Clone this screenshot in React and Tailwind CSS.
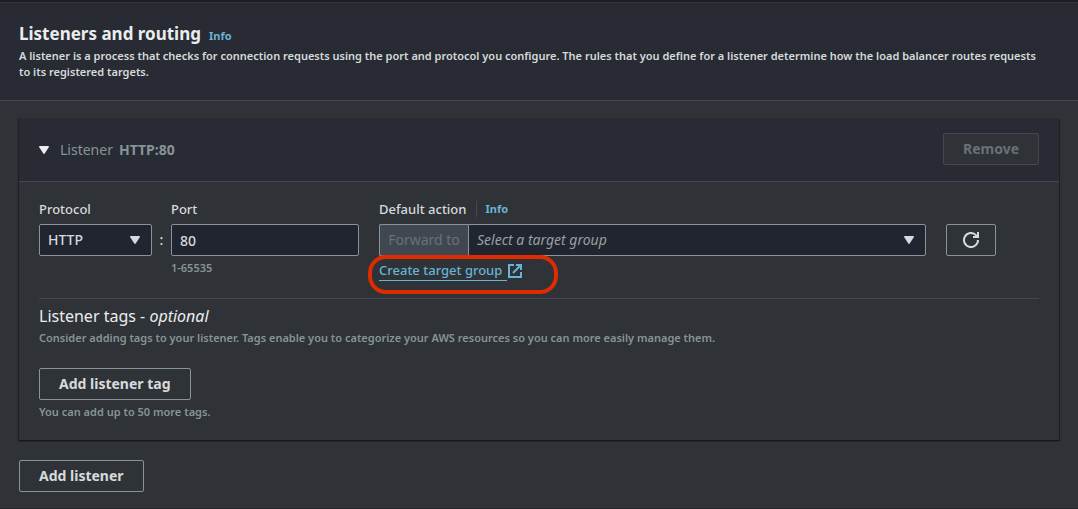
import { useState } from "react";

function Caret({ className = "" }) {
  return (
    <svg
      viewBox="0 0 10 8"
      className={`h-2 w-[10px] shrink-0 fill-current ${className}`}
      aria-hidden="true"
    >
      <path d="M.8 0h8.400c.7 0 1 .6.6 1.200L5.700 7.500c-.3.600-1.100.600-1.400 0L.2 1.200C-.2.600.1 0 .8 0z" />
    </svg>
  );
}

function ExternalIcon() {
  return (
    <svg
      viewBox="0 0 16 16"
      className="size-4 shrink-0"
      fill="none"
      stroke="currentColor"
      strokeWidth="2"
      aria-hidden="true"
    >
      <path d="M7 2H2v12h12V9" />
      <path d="M9 2h5v5" />
      <path d="M6 10l8-8" />
    </svg>
  );
}

function RefreshIcon() {
  return (
    <svg
      viewBox="0 0 16 16"
      className="size-4"
      fill="none"
      stroke="currentColor"
      strokeWidth="2"
      aria-hidden="true"
    >
      <path d="M15 8a7 7 0 1 1-2-4.900L15 5" />
      <path d="M15 0v5h-5" />
    </svg>
  );
}

const button =
  "h-8 rounded-xs border border-[#879596] px-[19px] text-sm leading-5 font-bold text-[#d5dbdb]";
const field = "h-8 w-full rounded-xs border border-[#879596] bg-[#22252f] px-2 text-sm";
const label = "text-[13px] leading-5 font-medium";
const info = "text-[11px] leading-4 font-bold text-[#68b4d4]";
const hint = "text-[11px] leading-4 font-semibold text-[#879596]";

export default function App() {
  const [open, setOpen] = useState(true);
  const [port, setPort] = useState("80");

  return (
    <main className="border-t-2 border-[#1b1e24] bg-[#2f3237] font-['Noto_Sans',sans-serif] text-[#d5dbdb]">
      <section className="border-y border-t-[#323439] border-b-[#24272b]">
        <header className="border-b border-[#45484f] bg-[#282b33] px-[19px] pt-5 pb-5">
          <div className="flex items-baseline gap-2">
            <h2 className="text-[17px] leading-[22px] font-bold text-[#eaeded]">
              Listeners and routing
            </h2>
            <a href="#routing-info" className={info}>
              Info
            </a>
          </div>
          <p className="mt-[3px] pr-4 text-[11px] leading-4 font-semibold">
            A listener is a process that checks for connection requests using the port and protocol
            you configure. The rules that you define for a listener determine how the load balancer
            routes requests to its registered targets.
          </p>
        </header>

        <div className="px-[19px] pt-[17px] pb-4">
          <article className="shadow-[0_1px_1px_0_#14171a,1px_1px_1px_0_#202327,-1px_1px_1px_0_#202327]">
            <div className="flex items-center justify-between border-b border-[#45484f] bg-[#282b33] px-5 pt-[15px] pb-4">
              <button
                type="button"
                aria-expanded={open}
                onClick={() => setOpen(!open)}
                className="flex items-center pt-px text-sm leading-5 text-[#879596]"
              >
                <Caret className="mr-[11px] text-[#eaeded]" />
                <span className="mr-1.5">Listener</span>
                <strong className="font-bold">HTTP:80</strong>
              </button>
              <button
                type="button"
                disabled
                className="h-8 rounded-xs border border-[#45484f] bg-[#2f3237] px-[19px] text-sm leading-5 font-bold text-[#687078]"
              >
                Remove
              </button>
            </div>

            {open && (
              <div className="px-5 pt-[17px] pb-5">
                <div className="flex items-start pr-[43px] pb-[17px]">
                  <div className="w-[113px] shrink-0">
                    <label htmlFor="protocol" className={`${label} block`}>
                      Protocol
                    </label>
                    <div className="mt-[5px] grid items-center">
                      <select
                        id="protocol"
                        className={`${field} col-start-1 row-start-1 appearance-none font-medium`}
                      >
                        <option>HTTP</option>
                        <option>HTTPS</option>
                      </select>
                      <Caret className="pointer-events-none col-start-1 row-start-1 mr-3 justify-self-end" />
                    </div>
                  </div>
                  <span className="w-[19px] shrink-0 pt-[31px] text-center text-sm leading-5 font-medium">
                    :
                  </span>
                  <div className="min-w-0 flex-[188]">
                    <label htmlFor="port" className={`${label} block`}>
                      Port
                    </label>
                    <input
                      id="port"
                      value={port}
                      onChange={(e) => setPort(e.target.value)}
                      className={`${field} mt-[5px] block font-medium`}
                    />
                    <p className={`${hint} mt-1`}>1-65535</p>
                  </div>
                  <div className="ml-5 min-w-0 flex-[547]">
                    <div className="flex items-center">
                      <label htmlFor="target" className={label}>
                        Default action
                      </label>
                      <a
                        href="#action-info"
                        className={`${info} ml-2.5 border-l border-[#45484f] pl-2`}
                      >
                        Info
                      </a>
                    </div>
                    <div className="mt-[5px] flex">
                      <span className="h-8 w-[89px] shrink-0 rounded-l-xs border border-r-0 border-[#879596] bg-[#414750] text-center text-sm leading-[29px] text-[#687078]">
                        Forward to
                      </span>
                      <div className="grid min-w-0 flex-1 items-center">
                        <select
                          id="target"
                          className={`${field} col-start-1 row-start-1 appearance-none rounded-l-none text-[#95a0a1] italic`}
                        >
                          <option>Select a target group</option>
                        </select>
                        <Caret className="pointer-events-none col-start-1 row-start-1 mr-3 justify-self-end" />
                      </div>
                    </div>
                    <div className="relative mt-[5px] w-fit">
                      <a
                        href="#create-target-group"
                        className="flex items-center text-[13px] leading-5 font-medium text-[#68b4d4]"
                      >
                        <span className="border-b border-current pr-[5px] leading-[19px]">
                          Create target group
                        </span>
                        <ExternalIcon />
                      </a>
                      <span className="pointer-events-none absolute -top-[6px] -left-[11px] h-[39px] w-[190px] rounded-[18px] border-4 border-[#dd2c00]" />
                    </div>
                  </div>
                  <button
                    type="button"
                    aria-label="Refresh target groups"
                    className="mt-[25px] ml-5 flex h-8 w-[50px] shrink-0 items-center justify-center rounded-xs border border-[#879596]"
                  >
                    <RefreshIcon />
                  </button>
                </div>

                <div className="border-t border-[#45484f] pt-[6px]">
                  <h3 className="text-base leading-[22px] text-[#eaeded]">
                    Listener tags - <em>optional</em>
                  </h3>
                  <p className={`${hint} mt-[3px]`}>
                    Consider adding tags to your listener. Tags enable you to categorize your AWS
                    resources so you can more easily manage them.
                  </p>
                  <button type="button" className={`${button} mt-[22px] block`}>
                    Add listener tag
                  </button>
                  <p className={`${hint} mt-1`}>You can add up to 50 more tags.</p>
                </div>
              </div>
            )}
          </article>

          <button type="button" className={`${button} mt-5 block`}>
            Add listener
          </button>
        </div>
      </section>
    </main>
  );
}
